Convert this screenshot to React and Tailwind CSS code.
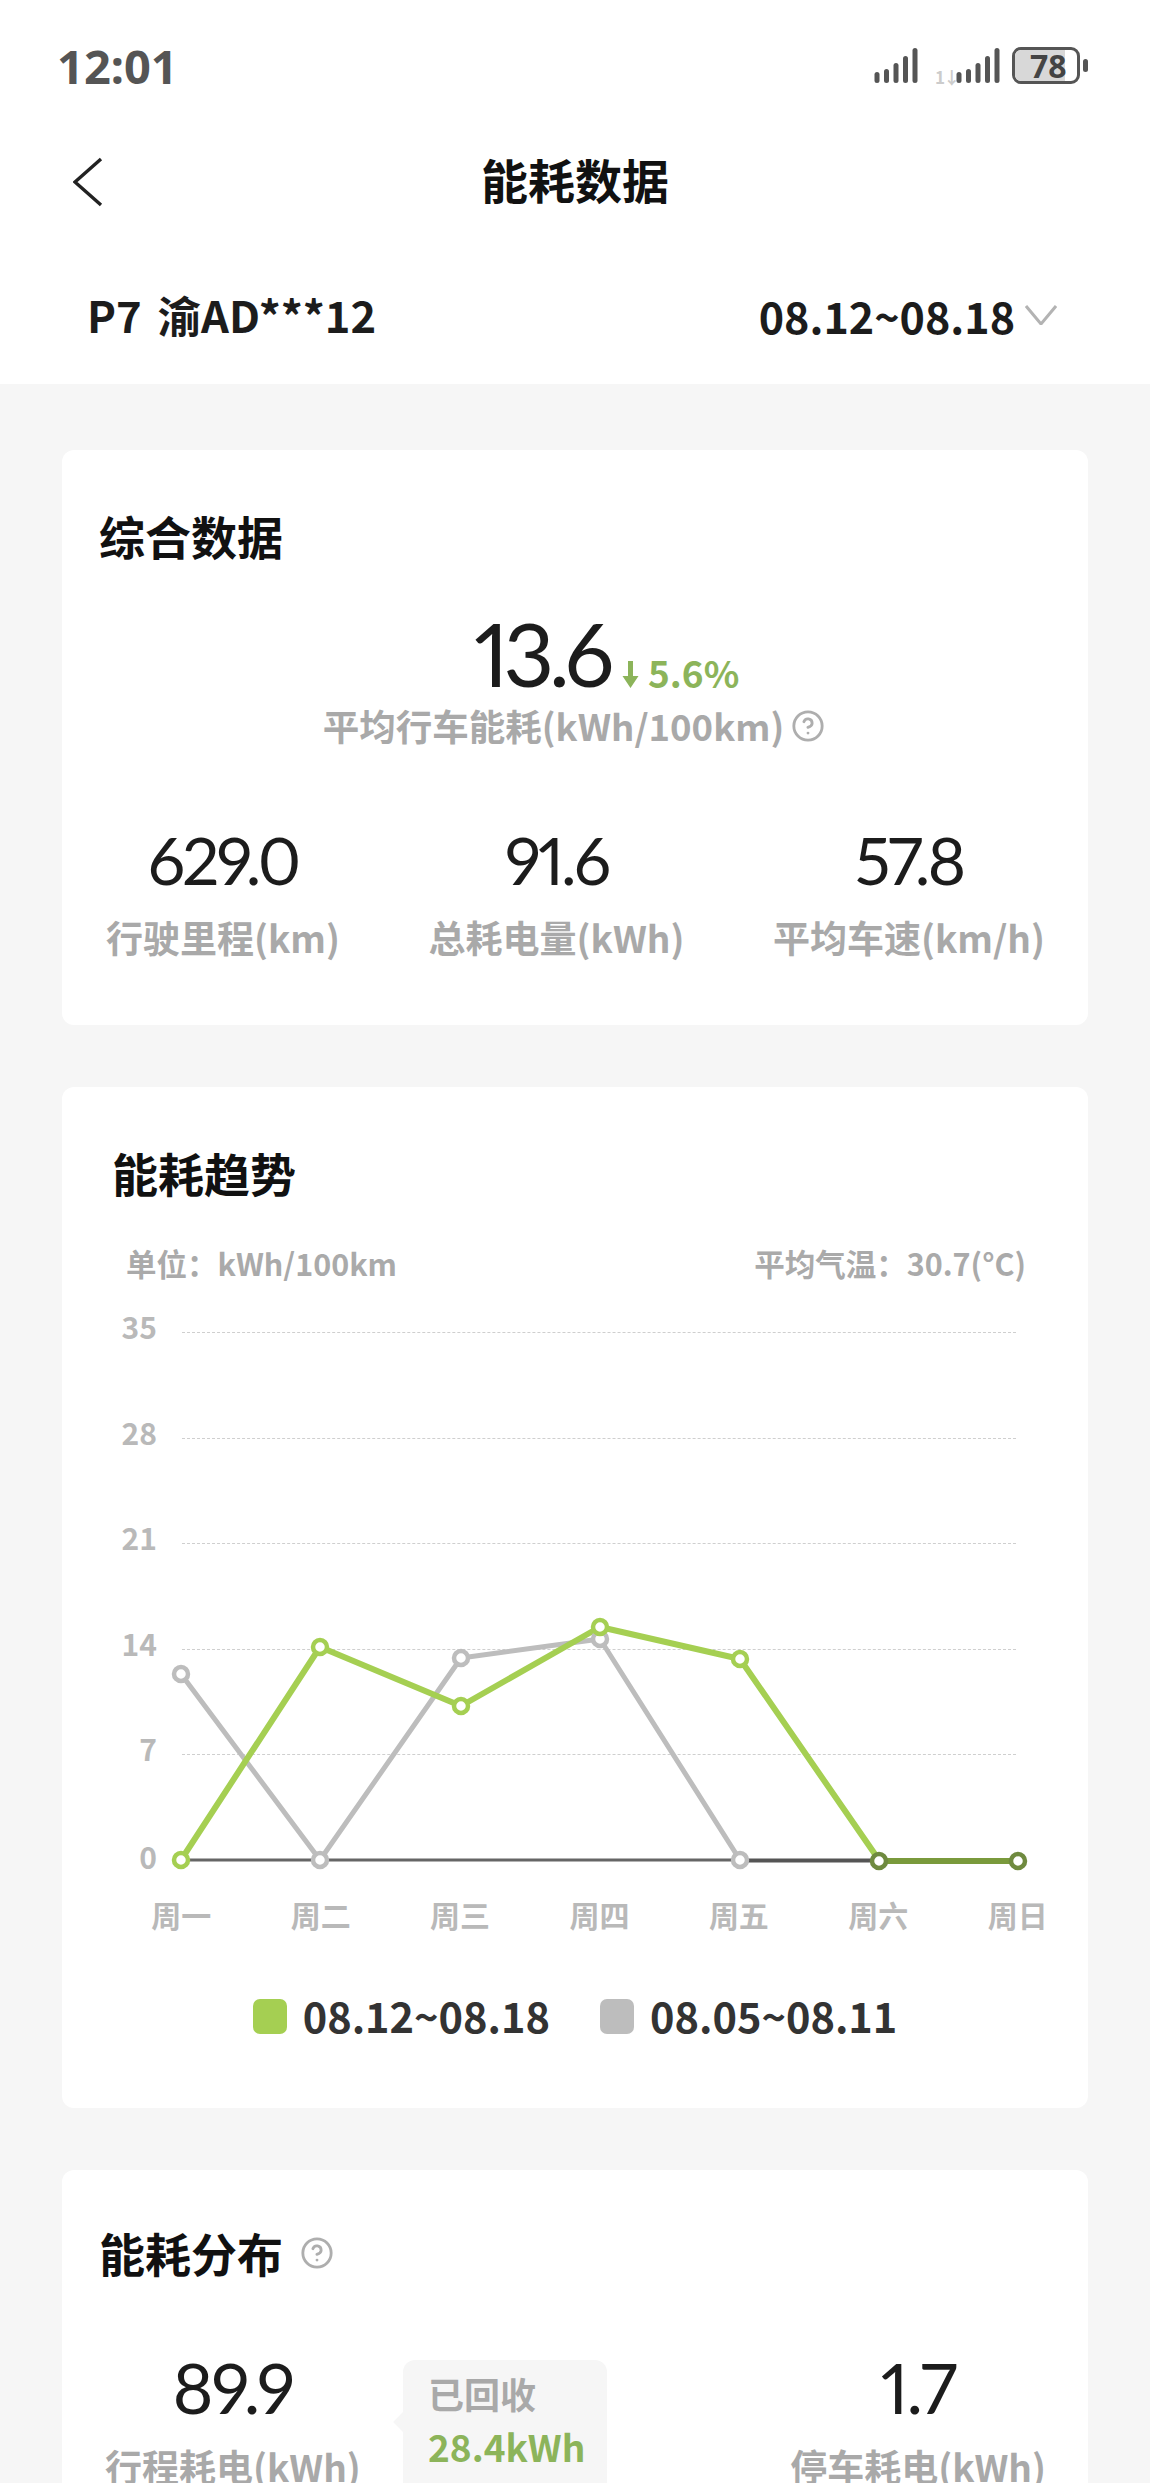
import React from "react";
import { CircleHelp } from "lucide-react";

const cjk = "font-['Noto_Sans_CJK_SC','Noto_Sans',sans-serif]";

const Signal = () => (
  <svg width="46" height="36" viewBox="0 0 46 36" fill="#555">
    <rect x="0.5" y="24" width="5" height="11" rx="2.5" />
    <rect x="10" y="21" width="5" height="14" rx="2.5" />
    <rect x="19.5" y="15" width="5" height="20" rx="2.5" />
    <rect x="29" y="8" width="5" height="27" rx="2.5" />
    <rect x="38.5" y="0" width="5" height="35" rx="2.5" />
  </svg>
);

const Stat = ({ value, label }) => (
  <div className="flex flex-col items-center">
    <div className="font-['Lato',sans-serif] proportional-nums text-[66px] leading-[70px] tracking-[-0.045em] text-[#1c1c1c]">{value}</div>
    <div className="mt-[20px] text-[37px] leading-[44px] font-bold text-[#a9a9a9] whitespace-nowrap">{label}</div>
  </div>
);

const Grid = ({ label }) => (
  <div className="flex h-[105.6px]">
    <div className="w-[95px] -mt-[23px] text-right text-[30px] leading-[34px] font-bold text-[#b9b9b9]">{label}</div>
    <div className="flex-1 ml-[25px] mr-[72px] border-t border-dashed border-[#cfcfcf]" />
  </div>
);

const Dot = ({ x, y, c }) => <circle cx={x} cy={y} r="7" fill="#fff" stroke={c} strokeWidth="4.5" />;

const green = [[181, 1860], [320, 1647], [461, 1706], [600, 1627], [740, 1659], [879, 1860]];
const gray = [[181, 1674], [320, 1860], [461, 1658], [600, 1639], [740, 1860]];

const Chart = () => (
  <div className="relative mt-[51px]">
    <Grid label="35" />
    <Grid label="28" />
    <Grid label="21" />
    <Grid label="14" />
    <Grid label="7" />
    <div className="flex h-[37px]">
      <div className="w-[95px] -mt-[21px] text-right text-[30px] leading-[34px] font-bold text-[#b9b9b9]">0</div>
    </div>
    <svg className="absolute left-0 top-0" width="1028" height="580" viewBox="62 1332 1028 580" fill="none">
      <path d="M181 1860H740" stroke="#666" strokeWidth="3" />
      <path d="M740 1860.5H879" stroke="#555" strokeWidth="4" />
      <polyline points={gray.map((p) => p.join(",")).join(" ")} stroke="#bdbdbd" strokeWidth="5" strokeLinejoin="round" />
      <polyline points={green.map((p) => p.join(",")).join(" ")} stroke="#a5cf52" strokeWidth="6" strokeLinejoin="round" />
      <path d="M879 1861H1018" stroke="#7a9a3c" strokeWidth="6" />
      {gray.map(([x, y]) => <Dot key={x} x={x} y={y} c="#bdbdbd" />)}
      {green.slice(0, 5).map(([x, y]) => <Dot key={x} x={x} y={y} c="#a5cf52" />)}
      <Dot x={879} y={1861} c="#6f8a3f" />
      <Dot x={1018} y={1861} c="#6f8a3f" />
    </svg>
    <div className="grid grid-cols-7 w-[975.8px] ml-[49.6px]">
      {["周一", "周二", "周三", "周四", "周五", "周六", "周日"].map((d) => (
        <div key={d} className="text-center text-[30px] leading-[34px] font-bold text-[#b9b9b9]">{d}</div>
      ))}
    </div>
    <div className="mt-[64px] flex justify-center items-center gap-[50px]">
      <div className="flex items-center gap-[16px]">
        <div className="mt-[4px] w-[34px] h-[35px] rounded-[7px] bg-[#a5cf52]" />
        <div className="text-[41.5px] leading-[40px] font-bold text-[#333]">08.12~08.18</div>
      </div>
      <div className="flex items-center gap-[16px]">
        <div className="mt-[4px] w-[34px] h-[35px] rounded-[7px] bg-[#bdbdbd]" />
        <div className="text-[41.5px] leading-[40px] font-bold text-[#333]">08.05~08.11</div>
      </div>
    </div>
  </div>
);

export default function App() {
  return (
    <div className={`${cjk} w-[1150px] h-[2483px] overflow-hidden bg-[#f6f6f6]`}>
      <div className="bg-white h-[384px]">
        <div className="h-[129px] flex justify-between pl-[57px] pr-[62px] pt-[48px]">
          <div className="font-['Noto_Sans',sans-serif] text-[47px] leading-[36px] font-bold text-[#555]">12:01</div>
          <div className="flex items-start">
            <Signal />
            <div className="ml-[15px] w-[21px] mt-[23px] text-[17px] leading-[12px] tracking-[-0.1em] font-bold text-[#ccc] whitespace-nowrap">1↓</div>
            <Signal />
            <div className="relative ml-[10px] w-[68px] h-[37px] -mt-[1px] rounded-[9px] border-[3px] border-[#555]">
              <div className="h-full w-[50px] rounded-l-[6px] bg-[#d8d8d8]" />
              <div className="absolute inset-0 pl-[15px] font-['Noto_Sans',sans-serif] text-[32px] leading-[31px] font-bold text-[#444]">78</div>
            </div>
            <div className="ml-[3px] mt-[11px] w-[5px] h-[13px] rounded-full bg-[#555]" />
          </div>
        </div>
        <div className="h-[100px] grid grid-cols-3 items-center px-[73px]">
          <svg className="mt-[6px]" width="30" height="50" viewBox="0 0 30 50" fill="none">
            <path d="M28 2L2 25L28 48" stroke="#222" strokeWidth="3.4" />
          </svg>
          <div className="text-center text-[47px] leading-[60px] font-bold text-[#111] whitespace-nowrap">能耗数据</div>
        </div>
        <div className="flex justify-between items-center pt-[56px] pl-[87px] pr-[93px]">
          <div className="text-[43.5px] leading-[60px] font-bold text-[#1c1c1c] whitespace-pre [word-spacing:6px]">P7 渝AD***12</div>
          <div className="flex items-center gap-[10px]">
            <div className="text-[43px] leading-[60px] font-bold text-[#1c1c1c]">08.12~08.18</div>
            <svg width="32" height="20" viewBox="0 0 32 20" fill="none">
              <path d="M1 1L16 19L31 1" stroke="#b3b3b3" strokeWidth="3" />
            </svg>
          </div>
        </div>
      </div>

      <div className="px-[62px] pt-[66px] flex flex-col gap-[62px]">
        <section className="bg-white rounded-[12px] pt-[55px] pb-[66px]">
          <h2 className="ml-[37px] text-[46px] leading-[60px] font-bold text-[#111]">综合数据</h2>
          <div className="mt-[48px] ml-[412px] flex items-end h-[80px]">
            <div className="font-['Lato',sans-serif] proportional-nums text-[88px] leading-[80px] tracking-[-0.06em] text-[#1c1c1c]">13.6</div>
            <svg className="ml-[13px] mb-[5px]" width="17" height="27" viewBox="0 0 17 27" fill="#8cb45a">
              <path d="M6 0H11V15H16.5L8.5 27L0.5 15H6Z" />
            </svg>
            <div className="ml-[9px] mb-[3px] text-[37px] leading-[36px] font-bold text-[#8cb45a]">5.6%</div>
          </div>
          <div className="mt-[11px] flex justify-center items-center gap-[7px] pr-[2px] text-[36.5px] leading-[44px] font-bold text-[#a9a9a9]">
            <span>平均行车能耗(kWh/100km)</span>
            <CircleHelp size={34} strokeWidth={2} color="#aeaeae" />
          </div>
          <div className="mt-[77px] flex justify-between pl-[44px] pr-[43px]">
            <Stat value="629.0" label="行驶里程(km)" />
            <Stat value="91.6" label="总耗电量(kWh)" />
            <Stat value="57.8" label="平均车速(km/h)" />
          </div>
        </section>

        <section className="bg-white rounded-[12px] pt-[55px] pb-[73px]">
          <h2 className="ml-[50px] text-[46px] leading-[60px] font-bold text-[#111]">能耗趋势</h2>
          <div className="mt-[43px] flex justify-between pl-[64px] pr-[62px] text-[30.5px] leading-[36px] font-bold text-[#aaa]">
            <span>单位：kWh/100km</span>
            <span>平均气温：30.7(°C)</span>
          </div>
          <Chart />
        </section>

        <section className="bg-white rounded-[12px] pt-[52px] h-[500px]">
          <div className="ml-[37px] flex items-center gap-[17px]">
            <h2 className="text-[46px] leading-[60px] font-bold text-[#111]">能耗分布</h2>
            <CircleHelp className="mt-[3px]" size={34} strokeWidth={2} color="#aeaeae" />
          </div>
          <div className="mt-[70px] flex items-start pl-[43px] pr-[42px]">
            <div className="flex flex-col items-center">
              <div className="font-['Lato',sans-serif] proportional-nums text-[70px] leading-[70px] tracking-[-0.03em] text-[#1c1c1c]">89.9</div>
              <div className="mt-[22px] text-[37px] leading-[44px] font-bold text-[#a9a9a9]">行程耗电(kWh)</div>
            </div>
            <div className="absolute left-[403px] mt-[8px] w-[204px] h-[200px] rounded-[12px] bg-[#f6f6f6] pl-[25px] pt-[11px]">
              <div className="absolute -left-[7px] top-[55px] w-[14px] h-[14px] rotate-45 bg-[#f6f6f6]" />
              <div className="text-[36px] leading-[44px] font-bold text-[#a9a9a9]">已回收</div>
              <div className="mt-[9px] text-[37px] leading-[44px] font-bold text-[#8cb45a]">28.4kWh</div>
            </div>
            <div className="ml-auto flex flex-col items-center">
              <div className="font-['Lato',sans-serif] proportional-nums text-[70px] leading-[70px] tracking-[-0.03em] text-[#1c1c1c]">1.7</div>
              <div className="mt-[22px] text-[37px] leading-[44px] font-bold text-[#a9a9a9]">停车耗电(kWh)</div>
            </div>
          </div>
        </section>
      </div>
    </div>
  );
}
